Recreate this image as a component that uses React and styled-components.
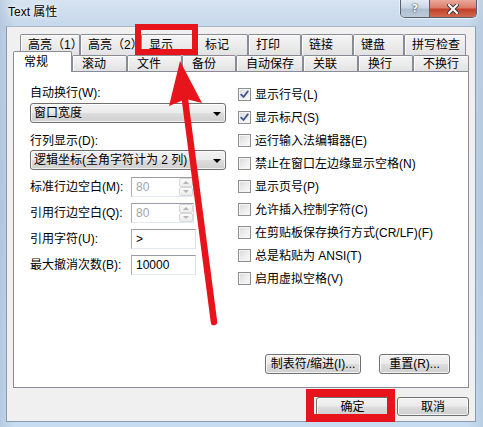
import React from "react";
import styled, { createGlobalStyle } from "styled-components";

const Global = createGlobalStyle`
  html, body { margin: 0; padding: 0; }
  body {
    width: 483px; height: 427px; overflow: hidden;
    font-family: "Liberation Sans", "Noto Sans CJK SC", sans-serif;
    font-size: 12px; color: #000;
  }
`;

const Window = styled.div`
  position: relative;
  width: 483px;
  height: 427px;
  overflow: hidden;
  display: flex;
  flex-direction: column;
  background:
    linear-gradient(90deg, rgba(150,170,195,0.35) 0%, rgba(255,255,255,0) 3%, rgba(255,255,255,0) 97%, rgba(150,170,195,0.3) 100%),
    linear-gradient(180deg, #d6e3f1 0%, #c6d8ec 6%, #bfd4ea 50%, #c8dcf1 100%);
`;

const TitleBar = styled.div`
  height: 26px;
  display: flex;
  align-items: flex-start;
  padding: 0 6px 0 8px;
  flex-shrink: 0;
`;

const Title = styled.div`
  margin-top: 5px;
  font-size: 12px;
  line-height: 14px;
  color: #000;
  text-shadow: 0 0 6px rgba(255, 255, 255, 0.95), 0 0 3px rgba(255,255,255,0.9);
`;

const Captions = styled.div`
  margin-left: auto;
  display: flex;
  height: 17px;
  border: 1px solid #56606c;
  border-top: none;
  border-radius: 0 0 5px 5px;
  overflow: hidden;
  box-shadow: 0 0 0 1px rgba(255,255,255,0.5);
`;

const CapButton = styled.div`
  width: ${p => p.$w}px;
  height: 17px;
  display: flex;
  align-items: center;
  justify-content: center;
  font-family: "DejaVu Sans", sans-serif;
  font-weight: bold;
  font-size: 11px;
  color: #fff;
  text-shadow: 0 0 2px #30404f, 0 0 1px #30404f;
  background: ${p => p.$close
    ? "linear-gradient(180deg, #e9a99b 0%, #dc7d6b 45%, #c4402a 55%, #d06a50 100%)"
    : "linear-gradient(180deg, #e3ebf3 0%, #c9d6e3 45%, #aebfd0 55%, #bccbda 100%)"};
  border-left: ${p => p.$close ? "1px solid #56606c" : "none"};
`;

const Client = styled.div`
  flex: 1;
  margin: 0 7px 5px 6px;
  background: #f0f0f0;
  border: 1px solid #8a99ab;
  border-top-color: #a9b8c8;
  padding: 7px 6px 0 6px;
  display: flex;
  flex-direction: column;
`;

const TabRow = styled.div`
  display: flex;
  align-items: flex-end;
  height: ${p => p.$h}px;
  padding-left: ${p => p.$indent}px;
`;

const Tab = styled.div`
  position: relative;
  box-sizing: border-box;
  flex-shrink: 0;
  width: ${p => p.$w}px;
  height: ${p => p.$h}px;
  padding: ${p => p.$pt}px 0 0 ${p => p.$pl}px;
  white-space: nowrap;
  font-size: 12px;
  line-height: 14px;
  color: #000;
  border: 1px solid #898c95;
  border-bottom: none;
  border-radius: 2px 2px 0 0;
  background: ${p => p.$active ? "#fff" : "linear-gradient(180deg, #f4f4f4 0%, #ececec 50%, #e2e2e2 100%)"};
  z-index: ${p => p.$active ? 3 : 0};
  margin-bottom: ${p => p.$active ? -1 : 0}px;
  box-shadow: ${p => p.$active ? "none" : "inset 1px 1px 0 #fcfcfc"};
`;

const Panel = styled.div`
  position: relative;
  z-index: 1;
  box-sizing: border-box;
  width: 456px;
  height: 317px;
  background: #fff;
  border: 1px solid #898c95;
  display: flex;
  flex-direction: column;
`;

const Columns = styled.div`
  flex: 1;
  display: flex;
  gap: 12px;
  padding: 13px 0 0 16px;
`;

const LeftCol = styled.div`
  width: 196px;
  display: flex;
  flex-direction: column;
`;

const RightCol = styled.div`
  margin-top: -2px;
  display: flex;
  flex-direction: column;
`;

const Label = styled.div`
  font-size: 12px;
  line-height: 16px;
  white-space: nowrap;
  margin-top: ${p => p.$mt || 0}px;
`;

const Select = styled.div`
  box-sizing: border-box;
  height: 20px;
  margin-top: ${p => p.$mt || 0}px;
  border: 1px solid #707070;
  border-radius: 3px;
  background: linear-gradient(180deg, #f3f3f3 0%, #ebebeb 48%, #dddddd 52%, #cfcfcf 100%);
  display: flex;
  align-items: center;
  padding: 0 0 0 3px;
  font-size: 12px;
  line-height: 14px;
  white-space: nowrap;
  box-shadow: inset 0 0 0 1px rgba(255,255,255,0.7);
`;

const SelectText = styled.span`
  flex: 1;
  overflow: hidden;
`;

const ArrowDown = styled.span`
  width: 0;
  height: 0;
  margin: 1px 4px 0 0;
  border-left: 4px solid transparent;
  border-right: 4px solid transparent;
  border-top: 4px solid #000;
`;

const FieldRows = styled.div`
  margin-top: 7px;
  display: flex;
  flex-direction: column;
  gap: 6px;
`;

const FieldRow = styled.div`
  display: flex;
  align-items: center;
  height: 20px;
`;

const FieldLabel = styled.div`
  width: 101px;
  font-size: 12px;
  line-height: 16px;
  white-space: nowrap;
`;

const Input = styled.div`
  box-sizing: border-box;
  width: ${p => p.$w}px;
  height: 20px;
  border: 1px solid #abadb3;
  border-top-color: #9a9ca3;
  border-bottom-color: #e3e9ef;
  border-right-color: #dbdfe6;
  background: #fff;
  display: flex;
  align-items: center;
  padding-left: 4px;
  font-size: 12px;
  line-height: 14px;
  color: ${p => p.$disabled ? "#a3a3a3" : "#000"};
`;

const InputValue = styled.span`
  flex: 1;
`;

const Spin = styled.div`
  width: 14px;
  height: 18px;
  display: flex;
  flex-direction: column;
`;

const SpinBtn = styled.div`
  flex: 1;
  box-sizing: border-box;
  border: 1px solid #d8d8d8;
  border-radius: 2px;
  background: linear-gradient(180deg, #fbfbfb, #ececec);
  display: flex;
  align-items: center;
  justify-content: center;
`;

const TriUp = styled.span`
  width: 0; height: 0;
  border-left: 3px solid transparent;
  border-right: 3px solid transparent;
  border-bottom: 3px solid #b5b5b5;
`;

const TriDown = styled.span`
  width: 0; height: 0;
  border-left: 3px solid transparent;
  border-right: 3px solid transparent;
  border-top: 3px solid #b5b5b5;
`;

const CheckRow = styled.div`
  display: flex;
  align-items: center;
  height: 23px;
  font-size: 12px;
  line-height: 16px;
  white-space: nowrap;
`;

const Box = styled.div`
  box-sizing: border-box;
  width: 13px;
  height: 13px;
  margin-right: 4px;
  border: 1px solid #8e8f8f;
  background: linear-gradient(135deg, #d9d9d9 0%, #ececec 50%, #fbfbfb 100%);
  box-shadow: inset 0 0 0 1px #f4f4f4;
  display: flex;
  align-items: center;
  justify-content: center;
`;

const ButtonRow = styled.div`
  display: flex;
  justify-content: flex-end;
  gap: ${p => p.$gap}px;
  padding-right: ${p => p.$pr}px;
  margin: ${p => p.$margin};
  width: ${p => p.$w ? `${p.$w}px` : "auto"};
`;

const Button = styled.div`
  box-sizing: border-box;
  width: ${p => p.$w}px;
  height: ${p => p.$h}px;
  border: 1px solid #707070;
  border-radius: 3px;
  background: linear-gradient(180deg, #f2f2f2 0%, #ebebeb 48%, #dddddd 52%, #cfcfcf 100%);
  box-shadow: inset 0 0 0 1px rgba(255,255,255,0.75);
  display: flex;
  align-items: center;
  justify-content: center;
  font-size: 12px;
  line-height: 14px;
  white-space: nowrap;
  color: #000;
`;

const Highlight = styled.div`
  position: absolute;
  left: ${p => p.$x}px;
  top: ${p => p.$y}px;
  width: ${p => p.$w}px;
  height: ${p => p.$h}px;
  box-sizing: border-box;
  border: ${p => p.$t}px solid #e8141b;
  pointer-events: none;
  z-index: 10;
`;

const Overlay = styled.svg`
  position: absolute;
  left: 0;
  top: 0;
  pointer-events: none;
  z-index: 11;
`;

const row1 = [
  ["高亮（1）", 60], ["高亮（2）", 61], ["显示", 56], ["标记", 51],
  ["打印", 53], ["链接", 52], ["键盘", 51], ["拼写检查", 62],
];
const row2 = [
  ["常规", 59, true], ["滚动", 55], ["文件", 55], ["备份", 54],
  ["自动保存", 67], ["关联", 55], ["换行", 55], ["不换行", 56],
];

const checks = [
  ["显示行号(L)", true],
  ["显示标尺(S)", true],
  ["运行输入法编辑器(E)", false],
  ["禁止在窗口左边缘显示空格(N)", false],
  ["显示页号(P)", false],
  ["允许插入控制字符(C)", false],
  ["在剪贴板保存换行方式(CR/LF)(F)", false],
  ["总是粘贴为 ANSI(T)", false],
  ["启用虚拟空格(V)", false],
];

const fields = [
  { label: "标准行边空白(M):", value: "80", spin: true },
  { label: "引用行边空白(Q):", value: "80", spin: true },
  { label: "引用字符(U):", value: ">" },
  { label: "最大撤消次数(B):", value: "10000" },
];

function CheckMark() {
  return (
    <svg width="9" height="9" viewBox="0 0 9 9">
      <path d="M1.2 4.6 L3.5 7 L7.8 1.4" fill="none" stroke="#3d5590" strokeWidth="1.8" strokeLinecap="round" strokeLinejoin="round" />
    </svg>
  );
}

export default function App() {
  return (
    <Window>
      <Global />
      <TitleBar>
        <Title>Text 属性</Title>
        <Captions>
          <CapButton $w={28}>?</CapButton>
          <CapButton $w={46} $close>
            <svg width="12" height="10" viewBox="0 0 12 10">
              <path d="M2 1 L10 9 M10 1 L2 9" stroke="#3a3a3a" strokeWidth="4" strokeLinecap="square" />
              <path d="M2 1 L10 9 M10 1 L2 9" stroke="#ffffff" strokeWidth="2" strokeLinecap="square" />
            </svg>
          </CapButton>
        </Captions>
      </TitleBar>

      <Client>
        <TabRow $h={21} $indent={7}>
          {row1.map(([t, w]) => (
            <Tab key={t} $w={w} $h={21} $pt={3} $pl={7}>{t}</Tab>
          ))}
        </TabRow>
        <TabRow $h={16} $indent={0}>
          {row2.map(([t, w, active]) => (
            <Tab key={t} $w={w} $h={active ? 21 : 16} $pt={active ? 3 : 1} $pl={active ? 10 : 9} $active={active}>{t}</Tab>
          ))}
        </TabRow>
        <Panel>
          <Columns>
            <LeftCol>
              <Label>自动换行(W):</Label>
              <Select $mt={2}>
                <SelectText>窗口宽度</SelectText>
                <ArrowDown />
              </Select>
              <Label $mt={10}>行列显示(D):</Label>
              <Select $mt={1}>
                <SelectText>逻辑坐标(全角字符计为 2 列)</SelectText>
                <ArrowDown />
              </Select>
              <FieldRows>
                {fields.map(f => (
                  <FieldRow key={f.label}>
                    <FieldLabel>{f.label}</FieldLabel>
                    <Input $w={f.spin ? 63 : 65} $disabled={f.spin}>
                      <InputValue>{f.value}</InputValue>
                      {f.spin && (
                        <Spin>
                          <SpinBtn><TriUp /></SpinBtn>
                          <SpinBtn><TriDown /></SpinBtn>
                        </Spin>
                      )}
                    </Input>
                  </FieldRow>
                ))}
              </FieldRows>
            </LeftCol>
            <RightCol>
              {checks.map(([t, on]) => (
                <CheckRow key={t}>
                  <Box>{on && <CheckMark />}</Box>
                  {t}
                </CheckRow>
              ))}
            </RightCol>
          </Columns>
          <ButtonRow $gap={18} $pr={18} $margin="0 0 13px 0">
            <Button $w={96} $h={20}>制表符/缩进(I)...</Button>
            <Button $w={71} $h={20}>重置(R)...</Button>
          </ButtonRow>
        </Panel>
        <ButtonRow $gap={8} $pr={0} $margin="9px 0 0 0" $w={456}>
          <Button $w={73} $h={19}>确定</Button>
          <Button $w={72} $h={19}>取消</Button>
        </ButtonRow>
      </Client>

      <Highlight $x={135} $y={24} $w={63} $h={31} $t={6} />
      <Highlight $x={306} $y={389} $w={89} $h={33} $t={8} />

      <Overlay width="483" height="427" viewBox="0 0 483 427">
        <line x1="214" y1="322" x2="185" y2="100" stroke="#e8141b" strokeWidth="6.5" strokeLinecap="round" />
        <polygon points="180,61 202,103 186,99 169,106" fill="#e8141b" />
      </Overlay>
    </Window>
  );
}
